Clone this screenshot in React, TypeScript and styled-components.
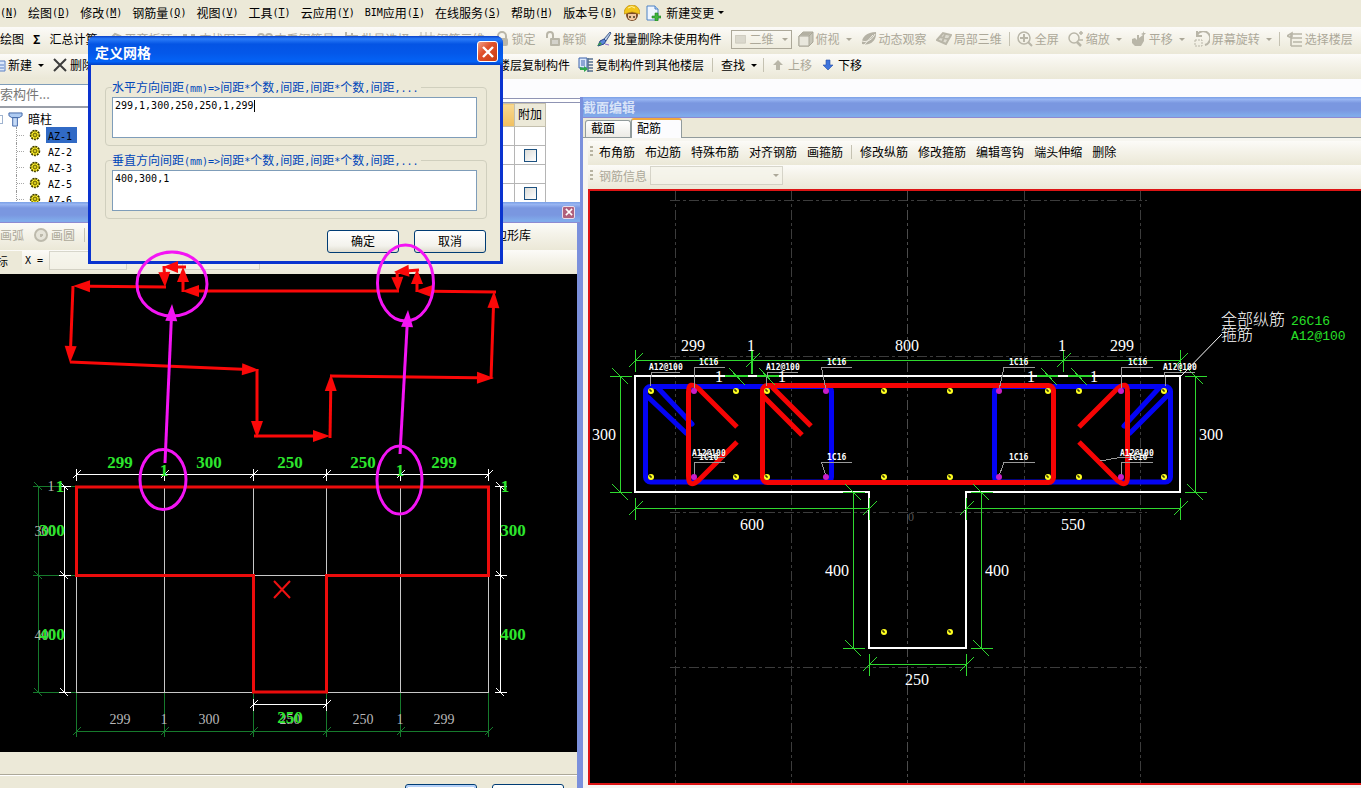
import React from 'react';
import styled, { createGlobalStyle, css } from 'styled-components';

const CJK = '"Noto Sans CJK SC", sans-serif';
const MONO = '"DejaVu Sans Mono", "Liberation Mono", monospace';

const GlobalStyle = createGlobalStyle`
  * { box-sizing: border-box; }
  html, body { margin: 0; height: 100%; overflow: hidden; }
  body {
    background: #ece9d8;
    color: #000;
    font-family: ${CJK};
    font-size: 12px;
    line-height: 16px;
  }
  button, input, textarea, select { font: inherit; color: inherit; margin: 0; }
`;

/* ---------- text ---------- */

const HalfWidth = styled.span`
  font-family: ${MONO};
  font-size: 10px;
`;

/** Sets the Latin runs of a string in the half-width face. */
function Mixed({ text }: { text: string }) {
  const runs = text.match(/[\x20-\x7e]+|[^\x20-\x7e]+/g) ?? [];
  return (
    <>
      {runs.map((run, i) => (/[\x20-\x7e]/.test(run) ? <HalfWidth key={i}>{run}</HalfWidth> : <span key={i}>{run}</span>))}
    </>
  );
}

/* ---------- frame ---------- */

const Page = styled.div`
  position: relative;
  display: flex;
  flex-direction: column;
  height: 100vh;
  overflow: hidden;
  background: #fcfcfe;
`;

const MenuBar = styled.nav`
  display: flex;
  align-items: center;
  gap: 10px;
  flex: 0 0 27px;
  padding-bottom: 2px;
  background: #ece9d8;
  white-space: nowrap;
  overflow: hidden;
`;

const FlatButton = styled.button`
  display: flex;
  align-items: center;
  flex-shrink: 0;
  padding: 0;
  border: 0;
  background: none;
  white-space: nowrap;
  &:disabled { color: #aca899; }
`;

const MenuIcons = styled.div`
  display: flex;
  align-items: center;
  gap: 5px;
  margin-left: -3px;
`;

const ToolBar = styled.div<{ $h: number; $gap?: number }>`
  display: flex;
  align-items: center;
  gap: ${(p) => p.$gap ?? 9}px;
  flex: 0 0 ${(p) => p.$h}px;
  padding-bottom: 3px;
  background: linear-gradient(#fcfbf8, #f4f2e8 45%, #ebe8d7);
  white-space: nowrap;
  overflow: hidden;
`;

const ToolButton = styled(FlatButton)`
  gap: 2px;
`;

const Separator = styled.span<{ $tight?: boolean }>`
  flex: 0 0 1px;
  height: 14px;
  margin: 0 ${(p) => (p.$tight ? -2 : 0)}px;
  background: #c5c2b2;
`;

const Triangle = styled.span<{ $dim?: boolean }>`
  width: 0;
  margin-left: 4px;
  border: 3px solid transparent;
  border-bottom-width: 0;
  border-top-color: ${(p) => (p.$dim ? '#aca899' : '#000')};
`;

const ViewBox2D = styled(FlatButton)`
  gap: 4px;
  width: 61px;
  height: 19px;
  padding: 0 3px;
  margin-right: -3px;
  border: 1px solid #aca899;
`;

const LeadGroup = styled.div`
  display: flex;
  align-items: center;
  gap: 8px;
  flex: 0 0 454px;
`;

/* ---------- workspace ---------- */

const Workspace = styled.main`
  display: flex;
  flex: 1;
  min-height: 0;
`;

const LeftColumn = styled.div`
  display: flex;
  flex-direction: column;
  flex: 0 0 580px;
  min-width: 0;
`;

const Browser = styled.div`
  display: flex;
  flex: 0 0 123px;
  overflow: hidden;
`;

const ComponentPane = styled.section`
  display: flex;
  flex-direction: column;
  width: 300px;
  background: #fff;
  border-top: 5px solid #ece9d8;
`;

const SearchInput = styled.input`
  flex: 0 0 24px;
  padding: 0 0 4px;
  border: 1px solid #7f9db9;
  border-width: 1px 0 2px;
  border-bottom-color: #9a9fa8;
  background: #fff;
  font-size: 13px;
  &::placeholder { color: #777; opacity: 1; }
`;

const Tree = styled.ul`
  margin: 0;
  padding: 3px 0 0;
  list-style: none;
  ul { margin: 0; padding: 0 0 0 16px; list-style: none; }
`;

const TreeRow = styled.div`
  display: flex;
  align-items: center;
  gap: 5px;
  height: 16px;
`;

const TreeBranch = styled.span`
  width: 8px;
  height: 16px;
  flex-shrink: 0;
  border-left: 1px dotted #999;
  background: linear-gradient(90deg, #aaa 50%, transparent 50%) 0 8px / 2px 1px repeat-x;
`;

const RootBranch = styled.span`
  width: 3px;
  height: 9px;
  border: 1px solid #9fb3cf;
  border-left: 0;
`;

const TreeLabel = styled.span<{ $on?: boolean }>`
  height: 16px;
  padding: 0 5px 0 2px;
  ${(p) => p.$on && css`background: #316ac5;`}
`;

const PropertyPane = styled.section`
  flex: 1;
  margin-top: 19px;
  padding-top: 3px;
  border-top: 1px solid #8f94b4;
  background: #fff;
`;

const PropertyRule = styled.div`
  border-top: 1px solid #8f94b4;
`;

const PropertyTable = styled.table`
  width: 246px;
  border-collapse: collapse;
  table-layout: fixed;
  background: #fff;
  th { height: 23px; padding: 0 0 2px; font-weight: 400; border: 1px solid #c4c0ae; }
  td { height: 19px; padding: 0; border: 1px solid #b5b5b5; text-align: center; }
`;

const Th = styled.th<{ $hot?: boolean }>`
  background: ${(p) => (p.$hot ? 'linear-gradient(#f8d890, #f0c060)' : '#ece9d8')};
`;

const Tick = styled.input`
  appearance: none;
  display: block;
  width: 13px;
  height: 13px;
  margin: 0 auto;
  border: 1px solid #1c5180;
  background: linear-gradient(135deg, #dcdcd7, #fff);
`;

/* ---------- child windows ---------- */

const ChildWindow = styled.section`
  display: flex;
  flex-direction: column;
  flex: 1;
  min-width: 0;
  min-height: 0;
  background: #ece9d8;
`;

const SectionWindow = styled(ChildWindow)`
  margin-top: 18px;
  border-left: 3px solid #7b90dc;
`;

const WindowTitle = styled.header`
  display: flex;
  align-items: center;
  justify-content: space-between;
  flex: 0 0 21px;
  padding: 0 5px 0 0;
  border-bottom: 1px solid #8d8ad2;
  background: linear-gradient(#7aa0e6, #98b5f2 12%, #7a97e0 30%, #7a97e0 65%, #80aaea 92%);
  color: #d8e4f8;
  font-size: 13px;
  font-weight: 700;
`;

const SmallClose = styled.button`
  display: grid;
  place-items: center;
  width: 13px;
  height: 13px;
  padding: 0;
  border: 1px solid #e8dcea;
  border-radius: 2px;
  background: #b0607c;
`;

const DrawBody = styled.div`
  display: flex;
  flex-direction: column;
  flex: 1;
  min-height: 0;
  border-right: 3px solid #7b90dc;
`;

const Canvas = styled.div`
  flex: 1;
  min-height: 0;
  background: #000;
  overflow: hidden;
  svg { display: block; }
`;

const CanvasFrame = styled.div`
  display: flex;
  flex: 1;
  min-height: 0;
  padding: 0 0 3px 5px;
  background: #f7f4f2;
`;

const FramedCanvas = styled(Canvas)`
  border: 2px solid #dc1414;
  border-right: 0;
`;

const DrawFooter = styled.footer`
  display: flex;
  flex-direction: column;
  flex: 0 0 36px;
  overflow: hidden;
`;

const FooterButtons = styled.div`
  display: flex;
  justify-content: flex-end;
  gap: 15px;
  margin-top: 22px;
  padding: 9px 13px 0 0;
  border-top: 1px solid #aca899;
  box-shadow: inset 0 1px #fff;
`;

const QueryArea = styled.div`
  display: flex;
  justify-content: flex-end;
  flex: 0 0 437px;
`;

const CoordTab = styled.span`
  display: flex;
  justify-content: flex-end;
  width: 22px;
  padding-right: 14px;
  line-height: 20px;
  background: #ece9d8;
`;

const CoordLabel = styled.label`
  display: flex;
  align-items: center;
  gap: 6px;
`;

const CoordSelect = styled.select<{ $w: number }>`
  appearance: none;
  width: ${(p) => p.$w}px;
  height: 19px;
  border: 1px solid #c9c7ba;
  background: #f5f4ea;
`;

const SelectWrap = styled.span`
  position: relative;
  display: flex;
`;

const SelectArrow = styled.span`
  position: absolute;
  right: 4px;
  top: 8px;
  border: 3px solid transparent;
  border-bottom: 0;
  border-top-color: #aca899;
`;

const Unit = styled(HalfWidth)`
  width: 25px;
  text-align: center;
`;

const Tabs = styled.div`
  display: flex;
  align-items: flex-end;
  flex: 0 0 20px;
  padding-left: 2px;
  border-bottom: 1px solid #919b9c;
`;

const Tab = styled.button<{ $on?: boolean }>`
  width: ${(p) => (p.$on ? 51 : 46)}px;
  height: ${(p) => (p.$on ? 20 : 17)}px;
  margin-bottom: ${(p) => (p.$on ? -1 : 0)}px;
  padding: 0 0 3px 5px;
  text-align: left;
  border: 1px solid #919b9c;
  border-bottom: 0;
  border-radius: 3px 3px 0 0;
  background: linear-gradient(#fff, #ecebe5);
  line-height: 13px;
  ${(p) => p.$on && css`
    background: #fcfcfe;
    border-top: 2px solid #f0a83c;
  `}
`;

const SectionTools = styled.div`
  flex: 0 0 51px;
  display: flex;
  flex-direction: column;
  padding: 3px 0 0 5px;
  background: #f7f6f0;
`;

const Grip = styled.span`
  width: 3px;
  height: 12px;
  margin-left: 2px;
  background: repeating-linear-gradient(#b8b4a2 0 2px, transparent 2px 4px);
`;

const ToolHead = styled.div`
  display: flex;
  align-items: center;
  gap: 6px;
`;

const FieldLabel = styled.label`
  display: flex;
  align-items: center;
  gap: 3px;
  color: #aca899;
`;

/* ---------- dialog ---------- */

const Dialog = styled.form`
  position: absolute;
  left: 88px;
  top: 36px;
  width: 415px;
  display: flex;
  flex-direction: column;
  padding: 0 3px 3px;
  border-radius: 7px 7px 0 0;
  background: #0a33cf;
`;

const DialogTitle = styled.header`
  display: flex;
  align-items: center;
  justify-content: space-between;
  height: 29px;
  margin: 0 -3px;
  padding: 2px 5px 0 7px;
  border-radius: 7px 7px 0 0;
  background: linear-gradient(#0a40c8, #2a7cf8 10%, #0454e4 28%, #0458ea 60%, #0463f6 88%, #0340c4);
  color: #fff;
  font-size: 14px;
  line-height: 14px;
  font-weight: 700;
`;

const CloseButton = styled.button`
  display: grid;
  place-items: center;
  width: 21px;
  height: 21px;
  padding: 0;
  border: 1px solid #fff;
  border-radius: 3px;
  background: linear-gradient(135deg, #f0a088, #e0512c 40%, #c83c12);
`;

const DialogBody = styled.div`
  padding: 15px 13px 8px 14px;
  background: #ece9d8;
`;

const Group = styled.fieldset`
  margin: 0 0 7px;
  padding: 3px 9px 7px 6px;
  border: 1px solid #d0cfbe;
  border-radius: 4px;
  legend {
    height: 14px;
    padding: 0 3px 0 0;
    color: #0046b8;
    line-height: 14px;
    white-space: nowrap;
  }
`;

const AreaWrap = styled.div`
  position: relative;
  display: flex;
`;

const Area = styled.textarea`
  width: 100%;
  height: 41px;
  padding: 0 2px;
  border: 1px solid #7f9db9;
  background: #fff;
  resize: none;
  font-family: ${MONO};
  font-size: 10px;
  line-height: 16px;
`;

const Caret = styled.span`
  position: absolute;
  left: 142px;
  top: 3px;
  width: 1px;
  height: 12px;
  background: #000;
`;

const Actions = styled.div`
  display: flex;
  justify-content: flex-end;
  gap: 15px;
  padding: 4px 1px 0 0;
`;

const PushButton = styled.button<{ $default?: boolean }>`
  width: 72px;
  height: 23px;
  padding: 0 0 2px;
  border: 1px solid #003c74;
  border-radius: 3px;
  background: linear-gradient(#fff, #f3f2ec 70%, #dfdccf);
  line-height: 18px;
  ${(p) => p.$default && css`box-shadow: inset 0 0 0 2px #b4d0f8;`}
`;

const Overlay = styled.svg`
  position: absolute;
  left: 0;
  top: 0;
  width: 100%;
  height: 100%;
  pointer-events: none;
`;

/* ---------- icons ---------- */

const G = '#b9b6a8';
type IconName =
  | 'flat' | 'find' | 'search' | 'batch' | 'rebar' | 'lock' | 'unlock' | 'brush' | 'cube' | 'orbit' | 'local'
  | 'full' | 'zoom' | 'pan' | 'rotate' | 'floors' | 'copy' | 'up' | 'down' | 'cross' | 'doc' | 'circle' | 'rect'
  | 'helmet' | 'newdoc' | 'column' | 'gear' | 'x';

const shapes: Record<IconName, React.ReactNode> = {
  flat: <path d="M2 10l7-7 5 2-6 8z" fill="none" stroke={G} strokeWidth="2" />,
  find: <g fill={G}><circle cx="4" cy="10" r="4" /><circle cx="12" cy="10" r="4" /><path d="M2 3h4v6H2zM10 3h4v6h-4z" /></g>,
  search: <g fill="none" stroke={G} strokeWidth="2"><circle cx="4" cy="6" r="3" /><circle cx="12" cy="6" r="3" /></g>,
  batch: <path d="M2 1v13M2 5h12M8 2v8M2 10h12" fill="none" stroke={G} strokeWidth="2" />,
  rebar: <path d="M2 1v13M7 1v13M12 1v13M0 5h16M0 9h16" fill="none" stroke={G} />,
  lock: <g><path d="M4 8V5a4 4 0 018 0v3" fill="none" stroke={G} strokeWidth="2" /><rect x="2" y="7" width="12" height="8" rx="2" fill={G} /></g>,
  unlock: <g><path d="M2 7V4a3 3 0 016 0v3" fill="none" stroke={G} strokeWidth="2" /><rect x="5" y="7" width="10" height="8" rx="1" fill={G} /><path d="M7 10h6M7 12h6" stroke="#eee" /></g>,
  brush: <g><path d="M14 1l-6 7 2 2 5-8z" fill="#b8cbe8" stroke="#45608f" /><path d="M8 8l-4 2-2 5 6-2 2-3z" fill="#5b86d8" stroke="#28468c" /><path d="M1 15l3-4 2 2z" fill="#3d9c4a" /><path d="M9 13l4 1" stroke="#8a6ad0" /></g>,
  cube: <g><path d="M1 5l4-4h10v10l-4 4H1z" fill="#c6c4b7" stroke="#a9a698" /><path d="M1 5h10v10H1z" fill="#e9e7dd" stroke="#a9a698" /><path d="M11 5l4-4" stroke="#a9a698" /><path d="M2 4l3-3h9l-3 3z" fill="#b3b0a2" /></g>,
  orbit: <g><path d="M1 13C0 6 6 1 15 1c1 8-5 14-14 12z" fill="#b5b2a5" /><path d="M1 10C6 12 12 8 14 3M3 14l9-10" stroke="#f2f0e6" fill="none" /></g>,
  local: <g><path d="M1 9l6-7 8 2-5 9z" fill="#dddbd0" /><g fill="none" stroke={G} strokeWidth="2"><path d="M1 9l6-7 8 2-5 9zM4 6l8 2M6 12l3-9M1 9l9 4" /></g></g>,
  full: <g fill="none" stroke={G} strokeWidth="1.5"><circle cx="7" cy="7" r="6" /><path d="M7 3v8M3 7h8M11 11l4 4" strokeWidth="2" /></g>,
  zoom: <g fill="none" stroke={G} strokeWidth="1.5"><circle cx="6" cy="7" r="5" /><path d="M9 11l4 4" strokeWidth="2.5" /><path d="M11 2h4M13 0v4M11 9h4" /></g>,
  pan: <g fill={G}><path d="M1 8l3-1 2 2V4h2v3l4-3 1 2v4l-3 5H4l-3-3z" /><path d="M12 0l1 2h2l-2 2v3h-1V4l-2-1 2-1z" /></g>,
  rotate: <g fill="none" stroke={G} strokeWidth="2"><path d="M3 4a7 7 0 118 10M3 0v5h5" /><path d="M1 9h7v6H1z" strokeWidth="1" strokeDasharray="2 1" /></g>,
  floors: <path d="M4 3h11M6 7h9M6 11h9M4 15h11M0 5l5-3v5zM4 3v12" fill="none" stroke={G} strokeWidth="1.6" />,
  copy: <g><path d="M1 1h8v10H1z" fill="#dce8fb" stroke="#3b62ab" /><path d="M3 4h4M3 6h4M3 8h4" stroke="#3b62ab" /><path d="M10 2h5M10 5h5M10 8h5M10 11h5M10 14h5M10 1v14" stroke="#56708f" strokeWidth="1.5" /><path d="M2 10v3h4v2l4-3-4-3v2z" fill="#2fa84c" /></g>,
  up: <path d="M8 3l5 5h-3v5H6V8H3z" fill={G} />,
  down: <path d="M8 13l5-5h-3V3H6v5H3z" fill="#3f74dc" stroke="#274fa6" strokeWidth=".6" />,
  cross: <path d="M2 2l12 12M14 2L2 14" stroke="#3d3d3d" strokeWidth="2" fill="none" />,
  doc: <path d="M-2 4h7v10h-7M-2 8h6M-2 11h6" fill="#dbe7fa" stroke="#5a80c4" />,
  circle: <g><circle cx="8" cy="8" r="6" fill="#e6e4d9" stroke="#bdbaac" strokeWidth="2" /><path d="M8 8h2M8 7v3" stroke="#bdbaac" strokeWidth="2" /></g>,
  rect: <rect x="1" y="3" width="14" height="11" fill="#dad8cd" stroke="#c3c0b3" />,
  helmet: <g><circle cx="8" cy="10" r="6" fill="#7a4a28" /><path d="M4 9h8v4l-2 2H6l-2-2z" fill="#f0c8a0" /><path d="M6 11v2M10 11v2" stroke="#221" strokeWidth="1.3" /><path d="M0 9C0 3 4 0 8 0s8 3 8 9L8 7z" fill="#f2c51c" stroke="#b98a10" strokeWidth=".7" /><path d="M4 3q4-3 7 0" stroke="#fff3a0" fill="none" /></g>,
  newdoc: <g><path d="M2 1h8l3 3v11H2z" fill="#eef5fe" stroke="#4d82c4" /><path d="M10 1v3h3" fill="#bcd5f4" stroke="#4d82c4" /><path d="M10 8h3v3h3v2h-3v3h-3v-3H7v-2h3z" fill="#3db53a" stroke="#24802a" strokeWidth=".6" /></g>,
  column: <g><path d="M1 1h14v3l-3 2H4L1 4z" fill="#aecbf2" stroke="#3e64a6" /><path d="M5 6h5v9H5z" fill="#c6dbf7" stroke="#3e64a6" /></g>,
  gear: <g><circle cx="6" cy="6" r="4.500" fill="#fff02a" stroke="#3a3a00" strokeWidth="1.500" strokeDasharray="2 1" /><path d="M6 1v10M1 6h10M2.500 2.500l7 7M9.500 2.500l-7 7" stroke="#6a6200" strokeWidth=".7" /><circle cx="6" cy="6" r="1.500" fill="#fff02a" stroke="#4a4600" strokeWidth=".7" /></g>,
  x: <path d="M3 3l10 10M13 3L3 13" stroke="#fff" strokeWidth="2.4" fill="none" />,
};

function Icon({ name, size = 16, width }: { name: IconName; size?: number; width?: number }) {
  const box = name === 'gear' ? '0 0 12 12' : width ? `0 0 ${width} 16` : '0 0 16 16';
  return (
    <svg width={width ?? size} height={size} viewBox={box} aria-hidden="true">
      {shapes[name]}
    </svg>
  );
}

function Tool({ icon, text, off, drop }: { icon?: IconName; text: string; off?: boolean; drop?: boolean }) {
  return (
    <ToolButton type="button" disabled={off}>
      {icon && <Icon name={icon} />}
      {text}
      {drop && <Triangle $dim={off} />}
    </ToolButton>
  );
}

/* ---------- drawing helpers ---------- */

interface DimProps { at: number; stops: number[]; color: string; tick?: number; slash?: number }

function HDim({ at, stops, color, tick = 11, slash = 7 }: DimProps) {
  return (
    <path
      fill="none"
      stroke={color}
      shapeRendering="crispEdges"
      d={`M${stops[0]} ${at}H${stops[stops.length - 1]}` +
        stops.map((s) => `M${s} ${at - tick}V${at + tick}M${s - slash} ${at + slash}L${s + slash} ${at - slash}`).join('')}
    />
  );
}

function VDim({ at, stops, color, tick = 11, slash = 8 }: DimProps) {
  return (
    <path
      fill="none"
      stroke={color}
      shapeRendering="crispEdges"
      d={`M${at} ${stops[0]}V${stops[stops.length - 1]}` +
        stops.map((s) => `M${at - tick} ${s}H${at + tick}M${at - slash} ${s - slash}L${at + slash} ${s + slash}`).join('')}
    />
  );
}

type Pt = [number, number];

function Arrow({ from, to, color, head = 17 }: { from: Pt; to: Pt; color: string; head?: number }) {
  const len = Math.hypot(to[0] - from[0], to[1] - from[1]);
  const ux = (to[0] - from[0]) / len;
  const uy = (to[1] - from[1]) / len;
  const bx = to[0] - ux * head;
  const by = to[1] - uy * head;
  const w = 6;
  return (
    <g>
      <path d={`M${from[0]} ${from[1]}L${bx} ${by}`} stroke={color} strokeWidth="3" />
      <path d={`M${to[0]} ${to[1]}L${bx - uy * w} ${by + ux * w}L${bx + uy * w} ${by - ux * w}z`} fill={color} />
    </g>
  );
}

const Num = styled.text<{ $size: number; $color: string; $bold?: boolean }>`
  font-family: "Liberation Serif", serif;
  font-size: ${(p) => p.$size}px;
  font-weight: ${(p) => (p.$bold ? 700 : 400)};
  fill: ${(p) => p.$color};
  text-anchor: middle;
`;

const Tiny = styled.text`
  font-family: ${MONO};
  font-size: 8px;
  font-weight: 700;
  fill: #fff;
`;

const NoteCjk = styled.text`
  font-family: ${CJK};
  font-size: 16px;
  font-weight: 300;
  fill: #fff;
`;

const NoteLatin = styled.text`
  font-family: "Liberation Mono", monospace;
  font-size: 13px;
  fill: #28e028;
`;

const GREEN = '#2fd92f';
const DARK = '#167a2c';
const xs = [76.5, 164.5, 253.5, 326.5, 400.5, 488.5];
const ys = [486.5, 575.5, 692.5];

function GridDrawing() {
  const spans: [number, string][] = [[120, '299'], [209, '300'], [290, '250'], [363, '250'], [444, '299']];
  return (
    <svg width="100%" height="100%">
      <g transform="translate(0 -274)">
        <path
          stroke="#c8c8c8"
          shapeRendering="crispEdges"
          d={xs.map((x) => `M${x} 486V692`).join('') + ys.map((y) => `M76 ${y}H489`).join('')}
        />
        <path d={xs.map((x) => `M${x} 693V737`).join('')} stroke={DARK} shapeRendering="crispEdges" />
        <path d={ys.map((y) => `M33 ${y}H76`).join('')} stroke={DARK} shapeRendering="crispEdges" />
        <HDim at={731.5} stops={xs} color={DARK} tick={5} slash={4} />
        <VDim at={38.5} stops={ys} color={DARK} tick={6} slash={4} />
        {spans.map(([x, t]) => <Num key={x} x={x} y={724} $size={14} $color="#b8b8b8">{t}</Num>)}
        <Num x={164} y={724} $size={14} $color="#b8b8b8">1</Num>
        <Num x={400} y={724} $size={14} $color="#b8b8b8">1</Num>
        <Num x={51} y={491} $size={14} $color="#b8b8b8">1</Num>
        <Num x={45} y={536} $size={14} $color="#b8b8b8">300</Num>
        <Num x={45} y={640} $size={14} $color="#b8b8b8">400</Num>
        <path
          d="M76.5 487H488.5V575.5H326.5V692H253.5V575.5H76.5z"
          fill="none"
          stroke="#ec0c0c"
          strokeWidth="3"
        />
        <path d="M274 581L290 598M290 581L274 598" stroke="#ee1111" strokeWidth="2" />
        <HDim at={474.5} stops={xs} color="#fff" tick={6} slash={4} />
        <HDim at={704.5} stops={[253.5, 326.5]} color="#fff" tick={6} slash={4} />
        <VDim at={64.5} stops={ys} color="#fff" tick={6} slash={4} />
        <VDim at={500.5} stops={ys} color="#fff" tick={6} slash={4} />
        {spans.map(([x, t]) => <Num key={x} x={x} y={468} $size={17} $bold $color="#2de62d">{t}</Num>)}
        <Num x={164} y={476} $size={17} $bold $color="#2de62d">1</Num>
        <Num x={400} y={476} $size={17} $bold $color="#2de62d">1</Num>
        <Num x={60} y={492} $size={17} $bold $color="#2de62d">1</Num>
        <Num x={505} y={492} $size={17} $bold $color="#2de62d">1</Num>
        <Num x={52} y={536} $size={17} $bold $color="#2de62d">300</Num>
        <Num x={52} y={640} $size={17} $bold $color="#2de62d">400</Num>
        <Num x={513} y={536} $size={17} $bold $color="#2de62d">300</Num>
        <Num x={513} y={640} $size={17} $bold $color="#2de62d">400</Num>
        <Num x={290} y={723} $size={17} $bold $color="#2de62d">250</Num>
      </g>
    </svg>
  );
}

function SectionDrawing() {
  const yellow: Pt[] = [651, 736, 767, 884, 950, 1048, 1079, 1164].flatMap((x): Pt[] => [[x, 391], [x, 477]]);
  yellow.push([884, 632], [950, 632]);
  const purple: Pt[] = [694, 826, 999, 1121].flatMap((x): Pt[] => [[x, 391], [x, 477]]);
  const dims: [number, number, string][] = [
    [693, 351, '299'], [751, 351, '1'], [907, 351, '800'], [1062, 351, '1'], [1122, 351, '299'],
    [604, 440, '300'], [1211, 440, '300'], [752, 530, '600'], [1073, 530, '550'],
    [837, 576, '400'], [997, 576, '400'], [917, 685, '250'],
    [719, 382, '1'], [782, 382, '1'], [1031, 382, '1'], [1094, 382, '1'],
  ];
  const bars: [number, number][] = [[699, 365], [827, 365], [1009, 365], [1128, 365], [699, 460], [827, 460], [1009, 460], [1128, 460]];
  const stirrups: [number, number][] = [[649, 370], [766, 370], [1163, 370], [692, 456], [1120, 456]];
  return (
    <svg width="100%" height="100%">
      <g transform="translate(-590 -191)" fill="none">
        <path
          d="M675.5 191V783M791.5 191V783M1024.5 191V783M1140.5 191V783M670 200.5H1147M670 356.5H1147M670 512.5H1147M670 667.5H1147"
          stroke="#3c3c3c"
          strokeDasharray="10 3 3 3"
        />
        <path d="M907.5 191V783" stroke="#4c4c4c" strokeDasharray="10 3 3 3" />
        <Num x={911} y={521} $size={12} $color="#555">0</Num>

        <path d="M635 376H1180V492H966V648H869V492H635z" stroke="#fff" strokeWidth="2" />

        <g stroke="#0404f4" strokeWidth="5" strokeLinecap="round">
          <rect x="645.5" y="386.5" width="186" height="95.5" rx="5" />
          <rect x="994.5" y="386.5" width="176" height="95.5" rx="5" />
          <path d="M648 397L686 433M657 387L692 424M1168 395L1130 433M1160 387L1124 426" />
        </g>
        <g stroke="#f60404" strokeWidth="5">
          <rect x="762.5" y="385.5" width="291" height="97" rx="5" />
          <path d="M763 396L802 435M772 387L811 426" />
          <path d="M737 427L699 389Q688.500 380 688.500 392V476Q688.500 489 699 480L737 442" />
          <path d="M1079 427L1117 389Q1127.500 380 1127.500 392V476Q1127.500 489 1117 480L1079 442" />
        </g>

        <HDim at={360.5} stops={[635.5, 752.5, 1063.5, 1180.5]} color={GREEN} />
        <HDim at={508.5} stops={[635.5, 869.5]} color={GREEN} />
        <HDim at={508.5} stops={[966.5, 1180.5]} color={GREEN} />
        <HDim at={664.5} stops={[869.5, 966.5]} color={GREEN} />
        <VDim at={620.5} stops={[376.5, 492.5]} color={GREEN} />
        <VDim at={1195.5} stops={[376.5, 492.5]} color={GREEN} />
        <VDim at={853.5} stops={[492.5, 648.5]} color={GREEN} />
        <VDim at={981.5} stops={[492.5, 648.5]} color={GREEN} />
        <path d="M725 376H748M757 376H779M1037 376H1058M1068 376H1092M752 350V374" stroke={GREEN} strokeWidth="2" />
        <path d="M729 368L745 385M759 368L775 385M1041 368L1057 385M1071 368L1087 385" stroke={GREEN} shapeRendering="crispEdges" />

        <path
          stroke="#9a9a9a"
          shapeRendering="crispEdges"
          d="M694.500 390V367.500H725M826 390L821.500 367.500H852M999 390L1004 367.500H1035M1121.500 390V367.500H1153
             M694.500 476V462.500H725M826 476L821.500 462.500H852M999 476L1004 462.500H1035M1121.500 476V462.500H1153
             M650 386L651.500 372.500H680M766 386L767.500 372.500H798M1166 386L1164.500 372.500H1195
             M693 457.500H725M1100 461L1120 457.500H1153"
        />
        {yellow.map(([x, y]) => (
          <g key={`${x}-${y}`}>
            <circle cx={x} cy={y} r="3" fill="#ffff20" />
            <path d={`M${x - 1} ${y - 2}v2h2`} stroke="#000" />
          </g>
        ))}
        {purple.map(([x, y]) => (
          <circle key={`${x}-${y}`} cx={x} cy={y} r="3" fill="#c81ec8" />
        ))}
        {bars.map(([x, y]) => <Tiny key={`${x}-${y}`} x={x} y={y}>1C16</Tiny>)}
        {stirrups.map(([x, y]) => <Tiny key={`${x}-${y}`} x={x} y={y}>A12@100</Tiny>)}
        {dims.map(([x, y, t]) => <Num key={`${x}-${y}`} x={x} y={y} $size={16} $color="#fff">{t}</Num>)}

        <path d="M1181 376L1222 334" stroke="#fff" />
        <NoteCjk x={1221} y={325}>全部纵筋</NoteCjk>
        <NoteCjk x={1221} y={340}>箍筋</NoteCjk>
        <NoteLatin x={1291} y={325}>26C16</NoteLatin>
        <NoteLatin x={1291} y={340}>A12@100</NoteLatin>
      </g>
    </svg>
  );
}

function Markup() {
  const R = '#fb0808';
  const M = '#f414f4';
  const steps: [Pt, Pt][] = [
    [[166, 287], [73, 286]], [[73, 286], [70, 363]], [[70, 362], [259, 370]], [[257, 369], [257, 438]],
    [[254, 436], [330, 436]], [[330, 438], [331, 374]], [[330, 376], [494, 378]], [[491, 379], [494, 291]],
    [[496, 292], [415, 291]], [[399, 291], [182, 291]],
  ];
  const notches: [Pt, Pt][] = [
    [[417, 292], [417, 269]], [[419, 270], [394, 272]], [[397, 271], [398, 292]],
    [[183, 292], [183, 267]], [[186, 267], [163, 267]], [[164, 266], [165, 287]],
  ];
  return (
    <Overlay aria-hidden="true">
      {steps.map(([a, b], i) => <Arrow key={i} from={a} to={b} color={R} />)}
      {notches.map(([a, b], i) => <Arrow key={i} from={a} to={b} color={R} head={15} />)}
      <g fill="none" stroke={M} strokeWidth="3">
        <ellipse cx="172" cy="284" rx="35" ry="32" />
        <ellipse cx="405.5" cy="283" rx="28" ry="38" />
        <ellipse cx="163" cy="479.5" rx="23" ry="30" />
        <ellipse cx="399.500" cy="480" rx="22.500" ry="34" />
      </g>
      <Arrow from={[165, 463]} to={[172, 304]} color={M} />
      <Arrow from={[400, 454]} to={[408, 310]} color={M} />
    </Overlay>
  );
}

/* ---------- screens ---------- */

const menus: [string, string][] = [
  ['绘图', 'D'], ['修改', 'M'], ['钢筋量', 'Q'], ['视图', 'V'], ['工具', 'T'], ['云应用', 'Y'],
  ['BIM应用', 'I'], ['在线服务', 'S'], ['帮助', 'H'], ['版本号', 'B'],
];

function Menu({ text, hotkey }: { text: string; hotkey: string }) {
  return (
    <FlatButton type="button">
      <Mixed text={text} />
      <HalfWidth>(<u>{hotkey}</u>)</HalfWidth>
    </FlatButton>
  );
}

function GridDialog() {
  const rule = '间距(mm)=>间距*个数,间距,间距*个数,间距,...';
  return (
    <Dialog role="dialog" aria-labelledby="grid-title" onSubmit={(e) => e.preventDefault()}>
      <DialogTitle>
        <span id="grid-title">定义网格</span>
        <CloseButton type="button" aria-label="关闭"><Icon name="x" /></CloseButton>
      </DialogTitle>
      <DialogBody>
        <Group>
          <legend id="grid-h"><Mixed text={`水平方向${rule}`} /></legend>
          <AreaWrap>
            <Area aria-labelledby="grid-h" defaultValue="299,1,300,250,250,1,299" spellCheck={false} />
            <Caret />
          </AreaWrap>
        </Group>
        <Group>
          <legend id="grid-v"><Mixed text={`垂直方向${rule}`} /></legend>
          <AreaWrap>
            <Area aria-labelledby="grid-v" defaultValue="400,300,1" spellCheck={false} />
          </AreaWrap>
        </Group>
        <Actions>
          <PushButton type="submit">确定</PushButton>
          <PushButton type="button">取消</PushButton>
        </Actions>
      </DialogBody>
    </Dialog>
  );
}

function Combo({ id, width }: { id: string; width: number }) {
  return (
    <SelectWrap>
      <CoordSelect id={id} $w={width} disabled />
      <SelectArrow />
    </SelectWrap>
  );
}

export default function App() {
  return (
    <Page>
      <GlobalStyle />
      <MenuBar>
        <FlatButton type="button"><HalfWidth>(<u>N</u>)</HalfWidth></FlatButton>
        {menus.map(([t, k]) => <Menu key={k} text={t} hotkey={k} />)}
        <MenuIcons>
          <Icon name="helmet" />
          <FlatButton type="button" aria-label="新建"><Icon name="newdoc" /></FlatButton>
          <FlatButton type="button">新建变更<Triangle /></FlatButton>
        </MenuIcons>
      </MenuBar>

      <ToolBar $h={27}>
        <Tool text="绘图" />
        <ToolButton type="button"><b>Σ</b></ToolButton>
        <Tool text="汇总计算" />
        <Tool icon="flat" text="平齐板顶" off />
        <Tool icon="find" text="查找图元" off />
        <Tool icon="search" text="查看钢筋量" off />
        <Tool icon="batch" text="批量选择" off />
        <Tool icon="rebar" text="钢筋三维" off />
        <Tool icon="lock" text="锁定" off />
        <Tool icon="unlock" text="解锁" off />
        <Tool icon="brush" text="批量删除未使用构件" />
        <ViewBox2D type="button" disabled><Icon name="rect" />二维<Triangle $dim /></ViewBox2D>
        <Tool icon="cube" text="俯视" off drop />
        <Tool icon="orbit" text="动态观察" off />
        <Tool icon="local" text="局部三维" off />
        <Separator $tight />
        <Tool icon="full" text="全屏" off />
        <Tool icon="zoom" text="缩放" off drop />
        <Tool icon="pan" text="平移" off drop />
        <Tool icon="rotate" text="屏幕旋转" off drop />
        <Separator $tight />
        <Tool icon="floors" text="选择楼层" off />
        <ToolButton type="button" disabled aria-label="构件"><Icon name="cube" /></ToolButton>
      </ToolBar>

      <ToolBar $h={25} $gap={8}>
        <LeadGroup>
          <ToolButton type="button"><Icon name="doc" width={6} />新建<Triangle /></ToolButton>
          <Tool icon="cross" text="删除" />
        </LeadGroup>
        <Tool text="从其他楼层复制构件" />
        <Tool icon="copy" text="复制构件到其他楼层" />
        <Separator />
        <Tool text="查找" drop />
        <Separator $tight />
        <Tool icon="up" text="上移" off />
        <Tool icon="down" text="下移" />
      </ToolBar>

      <Workspace>
        <LeftColumn>
          <Browser>
            <ComponentPane>
              <SearchInput aria-label="搜索构件" placeholder="索构件..." />
              <Tree>
                <li>
                  <TreeRow><RootBranch /><Icon name="column" size={15} />暗柱</TreeRow>
                  <ul>
                    {['AZ-1', 'AZ-2', 'AZ-3', 'AZ-5', 'AZ-6'].map((n) => (
                      <li key={n}>
                        <TreeRow>
                          <TreeBranch />
                          <Icon name="gear" size={12} />
                          <TreeLabel $on={n === 'AZ-1'}><HalfWidth>{n}</HalfWidth></TreeLabel>
                        </TreeRow>
                      </li>
                    ))}
                  </ul>
                </li>
              </Tree>
            </ComponentPane>
            <PropertyPane>
              <PropertyRule />
              <PropertyTable>
                <colgroup><col /><col width="31" /></colgroup>
                <thead><tr><Th $hot>属性值</Th><Th>附加</Th></tr></thead>
                <tbody>
                  {[false, true, false, true].map((has, i) => (
                    <tr key={i}>
                      <td />
                      <td>{has && <Tick type="checkbox" aria-label="附加" />}</td>
                    </tr>
                  ))}
                </tbody>
              </PropertyTable>
            </PropertyPane>
          </Browser>

          <ChildWindow>
            <WindowTitle>
              <span />
              <SmallClose type="button" aria-label="关闭"><Icon name="x" size={10} /></SmallClose>
            </WindowTitle>
            <DrawBody>
              <ToolBar $h={27}>
                <Tool text="画弧" off />
                <Tool icon="circle" text="画圆" off />
                <Separator />
                <QueryArea><Tool text="查询多边形库" /></QueryArea>
              </ToolBar>
              <ToolBar $h={24} $gap={3}>
                <CoordTab>坐标</CoordTab>
                <CoordLabel htmlFor="cx"><HalfWidth>X =</HalfWidth><Combo id="cx" width={78} /></CoordLabel>
                <Unit>mm</Unit>
                <CoordLabel htmlFor="cy"><HalfWidth>Y =</HalfWidth><Combo id="cy" width={78} /></CoordLabel>
                <Unit>mm</Unit>
              </ToolBar>
              <Canvas><GridDrawing /></Canvas>
              <DrawFooter>
                <FooterButtons>
                  <PushButton type="button" $default>确定</PushButton>
                  <PushButton type="button">取消</PushButton>
                </FooterButtons>
              </DrawFooter>
            </DrawBody>
          </ChildWindow>
        </LeftColumn>

        <SectionWindow>
          <WindowTitle>截面编辑</WindowTitle>
          <Tabs role="tablist">
            <Tab type="button" role="tab" aria-selected="false">截面</Tab>
            <Tab type="button" role="tab" aria-selected="true" $on>配筋</Tab>
          </Tabs>
          <SectionTools>
            <ToolBar $h={24} $gap={10}>
              <ToolHead>
                <Grip />
                <Tool text="布角筋" />
              </ToolHead>
              <Tool text="布边筋" />
              <Tool text="特殊布筋" />
              <Tool text="对齐钢筋" />
              <Tool text="画箍筋" />
              <Separator $tight />
              {['修改纵筋', '修改箍筋', '编辑弯钩', '端头伸缩', '删除'].map((t) => <Tool key={t} text={t} />)}
            </ToolBar>
            <ToolBar $h={24} $gap={6}>
              <Grip />
              <FieldLabel htmlFor="rebar">钢筋信息<Combo id="rebar" width={133} /></FieldLabel>
            </ToolBar>
          </SectionTools>
          <CanvasFrame>
            <FramedCanvas><SectionDrawing /></FramedCanvas>
          </CanvasFrame>
        </SectionWindow>
      </Workspace>

      <GridDialog />
      <Markup />
    </Page>
  );
}
